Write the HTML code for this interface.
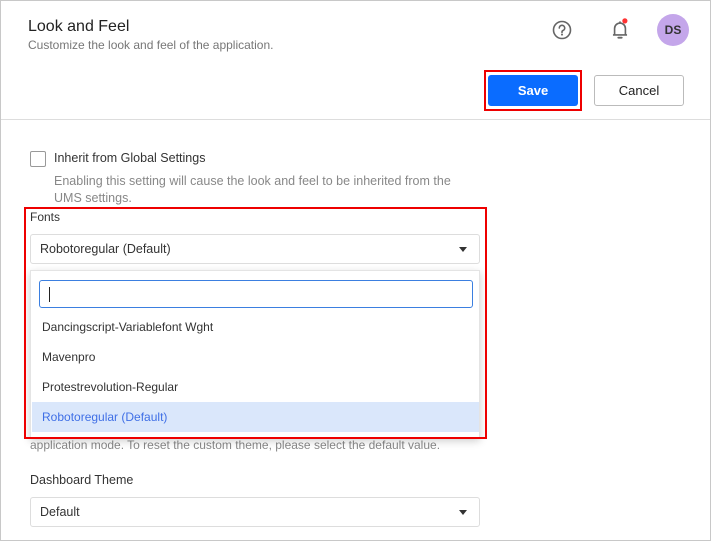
<!DOCTYPE html>
<html><head><style>
*{box-sizing:border-box;margin:0;padding:0}
body{width:711px;height:541px;overflow:hidden;background:#fff;font-family:"Liberation Sans",sans-serif;color:#222;position:relative}
.frame{position:absolute;left:0;top:0;width:711px;height:541px;border:1px solid #c8c8c8}
.a{position:absolute;white-space:nowrap}
.sel{position:absolute;left:30px;width:450px;height:30px;border:1px solid #ddd;border-radius:3px;font-size:12.5px;padding-left:9px;line-height:28px;color:#333}
.caret{position:absolute;right:12px;top:12px;width:0;height:0;border-left:4.5px solid transparent;border-right:4.5px solid transparent;border-top:5px solid #333}
.item{position:absolute;left:1px;width:448px;height:30px;line-height:30px;padding-left:10px;font-size:12px;color:#333}
</style></head><body>
<div class="frame"></div>
<div class="a" style="left:28px;top:18px;font-size:16px;font-weight:500;color:#222">Look and Feel</div>
<div class="a" style="left:28px;top:38px;font-size:12px;color:#777">Customize the look and feel of the application.</div>
<svg class="a" style="left:551px;top:19px" width="22" height="22" viewBox="0 0 22 22"><circle cx="11" cy="11" r="8.5" fill="none" stroke="#666" stroke-width="1.6"/><path d="M8.3 9a2.7 2.7 0 1 1 3.7 2.5c-.7.3-1 .8-1 1.5v.5" fill="none" stroke="#666" stroke-width="1.6" stroke-linecap="round"/><circle cx="11" cy="15.6" r="1" fill="#666"/></svg>
<svg class="a" style="left:607px;top:16px" width="26" height="26" viewBox="0 0 24 24"><path d="M5.5 17.5h13M7 17.5v-6a5 5 0 0 1 10 0v6" fill="none" stroke="#666" stroke-width="1.5"/><path d="M10.5 20h3" stroke="#666" stroke-width="1.8" stroke-linecap="round"/><line x1="12" y1="5" x2="12" y2="6.5" stroke="#666" stroke-width="1.5"/><circle cx="16.5" cy="4.5" r="2.4" fill="#f33"/></svg>
<div class="a" style="left:657px;top:14px;width:32px;height:32px;border-radius:50%;background:#c4a6ea;color:#333;font-size:12px;font-weight:bold;text-align:center;line-height:32px">DS</div>
<div class="a" style="left:484px;top:70px;width:98px;height:41px;border:2px solid #e00"></div>
<div class="a" style="left:488px;top:75px;width:90px;height:31px;background:#0a6cff;border-radius:3px;color:#fff;font-size:13px;font-weight:bold;text-align:center;line-height:31px">Save</div>
<div class="a" style="left:594px;top:75px;width:90px;height:31px;border:1px solid #bbb;border-radius:3px;color:#222;font-size:13px;font-weight:500;text-align:center;line-height:29px">Cancel</div>
<div class="a" style="left:1px;top:119px;width:709px;height:1px;background:#ddd"></div>
<div class="a" style="left:30px;top:151px;width:16px;height:16px;border:1px solid #999;border-radius:2px"></div>
<div class="a" style="left:54px;top:151px;font-size:12.5px;color:#333">Inherit from Global Settings</div>
<div class="a" style="left:54px;top:173px;font-size:12.5px;color:#888;line-height:17px">Enabling this setting will cause the look and feel to be inherited from the<br>UMS settings.</div>
<div class="a" style="left:30px;top:210px;font-size:12px;color:#333">Fonts</div>
<div class="sel" style="top:234px">Robotoregular (Default)<span class="caret"></span></div>
<div class="a" style="left:30px;top:438px;font-size:12px;color:#888">application mode. To reset the custom theme, please select the default value.</div>
<div class="a" style="left:30px;top:270px;width:450px;height:168px;background:#fff;border:1px solid #e4e4e4;box-shadow:0 3px 8px rgba(0,0,0,.2);overflow:hidden">
 <div class="a" style="left:8px;top:9px;width:434px;height:28px;border:1px solid #3b7fe0;border-radius:3px"><div class="a" style="left:9px;top:6px;width:1px;height:15px;background:#222"></div></div>
 <div class="item" style="top:41px">Dancingscript-Variablefont Wght</div>
 <div class="item" style="top:71px">Mavenpro</div>
 <div class="item" style="top:101px">Protestrevolution-Regular</div>
 <div class="item" style="top:131px;background:#dae7fb;color:#3f6fe6">Robotoregular (Default)</div>
</div>
<div class="a" style="left:24px;top:207px;width:463px;height:232px;border:2px solid #e00"></div>
<div class="a" style="left:30px;top:473px;font-size:12.5px;color:#333">Dashboard Theme</div>
<div class="sel" style="top:497px">Default<span class="caret"></span></div>
</body></html>
